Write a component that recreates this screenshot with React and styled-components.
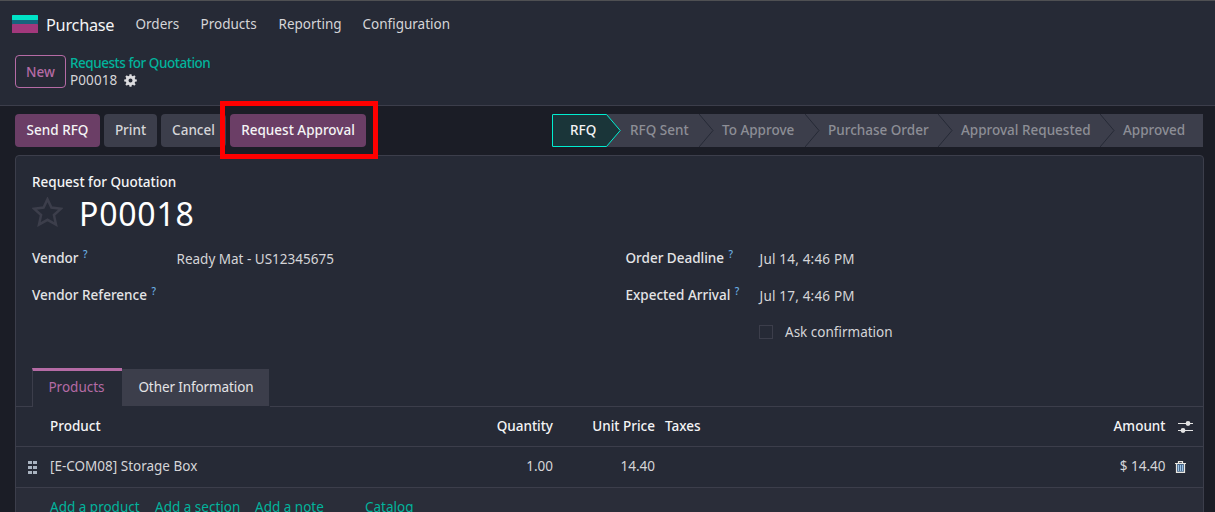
import React from "react";
import styled, { createGlobalStyle } from "styled-components";

const steps = [
  { label: "RFQ", width: 55, active: true },
  { label: "RFQ Sent", width: 92 },
  { label: "To Approve", width: 106 },
  { label: "Purchase Order", width: 133 },
  { label: "Approval Requested", width: 162 },
  { label: "Approved", width: 103 },
];

const menu = [
  { label: "Orders", width: 65 },
  { label: "Products", width: 78 },
  { label: "Reporting", width: 84 },
  { label: "Configuration", width: 90 },
];

const Help = () => <HelpMark>?</HelpMark>;

const Gear = () => (
  <GearIcon viewBox="-6.5 -6.5 13 13">
    {[0, 45, 90, 135, 180, 225, 270, 315].map((angle) => (
      <path key={angle} d="M-1.3 -4L-1 -6.3H1L1.3 -4Z" transform={`rotate(${angle})`} />
    ))}
    <circle r="3.4" fill="none" stroke="#dcdcdf" strokeWidth="2.8" />
  </GearIcon>
);

const App = () => {
  return (
    <React.Fragment>
      <GlobalStyle />
      <Page>
        <Header>
          <NavBar>
            <Logo viewBox="0 0 26 18">
              <rect width="26" height="5" rx="0.5" fill="#00e2c6" />
              <rect y="5" width="26" height="4" fill="#17647d" />
              <rect y="9" width="26" height="9" rx="0.5" fill="#a2387c" />
            </Logo>
            <AppName>Purchase</AppName>
            {menu.map((item) => (
              <MenuItem key={item.label} $width={item.width}>
                {item.label}
              </MenuItem>
            ))}
          </NavBar>
          <ControlPanel>
            <NewButton>New</NewButton>
            <Breadcrumb>
              <CrumbLink>Requests for Quotation</CrumbLink>
              <CrumbCurrent>
                P00018
                <Gear />
              </CrumbCurrent>
            </Breadcrumb>
          </ControlPanel>
        </Header>

        <StatusBar>
          <Buttons>
            <Button $primary $width={85}>
              Send RFQ
            </Button>
            <Button $width={53}>Print</Button>
            <Button $width={65}>Cancel</Button>
            <Marked>
              <Button $primary $width={136}>
                Request Approval
              </Button>
              <Marker />
            </Marked>
          </Buttons>
          <Steps>
            {steps.map((step, i) => (
              <Step key={step.label} $width={step.width} $active={step.active}>
                {step.active && (
                  <ActiveShape viewBox="0 0 70 33">
                    <path
                      d="M1 .5H54.5L68.2 16.5L54.5 32.5H1Q.5 32.5 .5 32V1Q.5 .5 1 .5Z"
                      fill="#1a3539"
                      stroke="#00edd0"
                    />
                  </ActiveShape>
                )}
                {i > 1 && (
                  <Chevron viewBox="0 0 15 33">
                    <path d="M0 0L14 16.5L0 33" fill="none" stroke="#262a36" />
                  </Chevron>
                )}
                <StepText>{step.label}</StepText>
              </Step>
            ))}
          </Steps>
        </StatusBar>

        <Sheet>
          <TitleBlock>
            <TitleLabel>Request for Quotation</TitleLabel>
            <TitleRow>
              <Star viewBox="0 0 31 30">
                <path
                  d="M15.5 2.2L19.4 10.6L29 11.7L21.9 18L24 27.6L15.5 22.8L7 27.6L9.1 18L2 11.7L11.6 10.6Z"
                  fill="none"
                  stroke="#3c3e4b"
                  strokeWidth="2.5"
                />
              </Star>
              <Title>P00018</Title>
            </TitleRow>
          </TitleBlock>

          <Groups>
            <Group $label={144.5} $width={593.5}>
              <Label>
                Vendor <Help />
              </Label>
              <Value>Ready Mat - US12345675</Value>
              <Label>
                Vendor Reference <Help />
              </Label>
              <Value />
            </Group>
            <Group $label={134} $width={500}>
              <Label>
                Order Deadline <Help />
              </Label>
              <Value $ls={0.2}>Jul 14, 4:46 PM</Value>
              <Label>
                Expected Arrival <Help />
              </Label>
              <Value $ls={0.2}>Jul 17, 4:46 PM</Value>
              <Label />
              <CheckRow>
                <Checkbox />
                Ask confirmation
              </CheckRow>
            </Group>
          </Groups>

          <Tabs>
            <TabSpace />
            <Tab $active $width={90}>
              Products
            </Tab>
            <Tab $width={147}>Other Information</Tab>
            <TabRest />
          </Tabs>

          <Row $head $height={40}>
            <span />
            <Cell>Product</Cell>
            <Cell $right>Quantity</Cell>
            <Cell $right>Unit Price</Cell>
            <Cell $left={10}>Taxes</Cell>
            <Cell $right>Amount</Cell>
            <Adjust viewBox="0 0 15 14">
              <path d="M0 3.5H15M0 10.5H15" stroke="#e4e4e4" strokeWidth="1.2" />
              <circle cx="10" cy="3.5" r="2.4" fill="#e4e4e4" />
              <circle cx="5" cy="10.5" r="2.4" fill="#e4e4e4" />
            </Adjust>
          </Row>
          <Row $height={41}>
            <Grip viewBox="0 0 9 13">
              {[0, 5, 10].map((y) => (
                <path key={y} d={`M0 ${y}h4v3h-4zM5 ${y}h4v3h-4z`} fill="#a9b3c0" />
              ))}
            </Grip>
            <Cell>[E-COM08] Storage Box</Cell>
            <Cell $right>1.00</Cell>
            <Cell $right>14.40</Cell>
            <Cell />
            <Cell $right>$ 14.40</Cell>
            <Trash viewBox="0 0 11 12">
              <path d="M2 3H9V11H2Z" fill="#4a698c" />
              <path
                d="M0 2.5H11M3.5 2.5V.7H7.5V2.5M1.5 2.5V11.4H9.5V2.5"
                fill="none"
                stroke="#e8e6e0"
                strokeWidth="1.2"
              />
              <path d="M3.5 4V10M5.5 4V10M7.5 4V10" stroke="#9cc3e6" />
            </Trash>
          </Row>
          <AddRow>
            <AddLink $width={105}>Add a product</AddLink>
            <AddLink $width={100}>Add a section</AddLink>
            <AddLink $width={110}>Add a note</AddLink>
            <AddLink $width={60}>Catalog</AddLink>
          </AddRow>
        </Sheet>
      </Page>
    </React.Fragment>
  );
};

const GlobalStyle = createGlobalStyle`
  * {
    box-sizing: border-box;
  }

  body {
    margin: 0;
    overflow: hidden;
    background: #1b1d26;
  }

  svg {
    display: block;
    flex-shrink: 0;
  }
`;

const Page = styled.div`
  height: 512px;
  overflow: hidden;
  display: flex;
  flex-direction: column;
  background: #1b1d26;
  color: #d5d5d8;
  font-family: "Noto Sans", sans-serif;
  font-size: 13.5px;
  line-height: 18px;
  white-space: nowrap;
`;

const Header = styled.header`
  height: 106px;
  flex-shrink: 0;
  background: #262a36;
  border-top: 1px solid #4f5053;
  border-bottom: 1px solid #3c3e4b;
`;

const NavBar = styled.nav`
  height: 46px;
  padding-left: 12px;
  display: flex;
  align-items: center;
`;

const Logo = styled.svg`
  width: 26px;
  height: 18px;
`;

const AppName = styled.div`
  width: 89.5px;
  margin: 2px 0 0 8px;
  padding-bottom: 1px;
  font-size: 16.3px;
  letter-spacing: -0.25px;
  color: #f4f4f5;
`;

const MenuItem = styled.div`
  width: ${(props) => props.$width}px;
`;

const ControlPanel = styled.div`
  padding: 8px 15px 0;
  display: flex;
`;

const NewButton = styled.button`
  width: 51px;
  height: 33px;
  padding: 0;
  border: 1px solid #b56ba5;
  border-radius: 4px;
  background: transparent;
  color: #b56ba5;
  font: inherit;
  font-weight: 500;
`;

const Breadcrumb = styled.div`
  padding-left: 4px;
  line-height: 17px;
`;

const CrumbLink = styled.div`
  color: #02b39c;
  font-weight: 500;
  letter-spacing: -0.47px;
`;

const CrumbCurrent = styled.div`
  display: flex;
  align-items: center;
  gap: 7px;
  letter-spacing: 0.1px;
`;

const GearIcon = styled.svg`
  width: 13px;
  height: 13px;
  fill: #dcdcdf;
`;

const StatusBar = styled.div`
  height: 49px;
  flex-shrink: 0;
  padding: 8px 12px 0 15px;
  display: flex;
  justify-content: space-between;
`;

const Buttons = styled.div`
  display: flex;
  gap: 4px;
`;

const Button = styled.button`
  width: ${(props) => props.$width}px;
  height: 33px;
  padding: 0 0 2px;
  border: 0;
  border-radius: 4px;
  background: ${(props) => (props.$primary ? "#6b3e66" : "#3c3e4b")};
  color: ${(props) => (props.$primary ? "#f4f4f5" : "#d5d5d8")};
  font: inherit;
  font-weight: 500;
`;

const Marked = styled.div`
  position: relative;
`;

const Marker = styled.div`
  position: absolute;
  top: -13px;
  left: -10px;
  width: 158px;
  height: 58px;
  border: 5px solid #fe0000;
`;

const Steps = styled.div`
  display: flex;
`;

const Step = styled.div`
  position: relative;
  width: ${(props) => props.$width}px;
  height: 33px;
  padding: 0 0 2px ${(props) => (props.$active ? 18 : 23)}px;
  display: flex;
  align-items: center;
  z-index: ${(props) => (props.$active ? 1 : 0)};
  background: #3c3e4b;
  color: ${(props) => (props.$active ? "#f4f4f5" : "#8d8e96")};
  font-weight: 500;
`;

const StepText = styled.span`
  position: relative;
`;

const ActiveShape = styled.svg`
  position: absolute;
  top: 0;
  left: 0;
  width: 70px;
  height: 33px;
`;

const Chevron = styled.svg`
  position: absolute;
  top: 0;
  left: 0;
  width: 15px;
  height: 33px;
`;

const Sheet = styled.main`
  height: 380px;
  flex-shrink: 0;
  margin: 0 11px 0 15px;
  border: 1px solid #3c3e4b;
  border-radius: 4px;
  background: #262a36;
`;

const TitleBlock = styled.div`
  height: 84px;
  padding: 17px 16px 0;
`;

const TitleLabel = styled.div`
  color: #f4f4f5;
  font-weight: 500;
`;

const TitleRow = styled.div`
  height: 44px;
  display: flex;
  align-items: center;
`;

const Star = styled.svg`
  width: 31px;
  height: 30px;
  margin-top: -2px;
`;

const Title = styled.h1`
  margin: 1px 0 0 16px;
  color: #ffffff;
  font-size: 32px;
  font-weight: 400;
  line-height: 44px;
  letter-spacing: 0.8px;
`;

const Groups = styled.div`
  height: 128px;
  padding-left: 16px;
  display: flex;
`;

const Group = styled.div`
  width: ${(props) => props.$width}px;
  display: grid;
  grid-template-columns: ${(props) => props.$label}px 1fr;
  grid-auto-rows: 37px;
`;

const Label = styled.div`
  padding-top: 9px;
  color: #e4e4e6;
  font-weight: 500;
`;

const HelpMark = styled.sup`
  margin-left: 1px;
  font-size: 10px;
  line-height: 0;
  color: #6cb0e6;
`;

const Value = styled.div`
  padding-top: 10px;
  letter-spacing: ${(props) => props.$ls || 0}px;
`;

const CheckRow = styled.div`
  height: 36px;
  display: flex;
  align-items: center;
  gap: 12px;
`;

const Checkbox = styled.span`
  width: 14px;
  height: 14px;
  margin-left: -0.5px;
  border: 1px solid #3c3e4b;
`;

const Tabs = styled.div`
  height: 39px;
  display: flex;
`;

const TabSpace = styled.div`
  width: 16px;
  border-bottom: 1px solid #3c3e4b;
`;

const Tab = styled.div`
  width: ${(props) => props.$width}px;
  height: 39px;
  display: flex;
  align-items: center;
  justify-content: center;
  ${(props) =>
    props.$active
      ? `
    border-top: 3px solid #b56ba5;
    border-left: 1px solid #3c3e4b;
    padding: 0 2px 5px 0;
    color: #b56ba5;
  `
      : `
    margin-top: 1px;
    height: 37px;
    background: #3c3e4b;
    padding: 0 0 1px 1px;
    letter-spacing: -0.1px;
    color: #e4e4e6;
  `}
`;

const TabRest = styled.div`
  flex: 1;
  margin-left: 1px;
  border-bottom: 1px solid #3c3e4b;
`;

const Row = styled.div`
  height: ${(props) => props.$height}px;
  display: grid;
  grid-template-columns: 34px 440px 63px 102px 200px 310.5px 1fr;
  align-items: center;
  border-bottom: 1px solid #3c3e4b;
  ${(props) => props.$head && "font-weight: 500; color: #f4f4f5;"}
`;

const Cell = styled.div`
  padding: 0 0 2px ${(props) => props.$left || 0}px;
  text-align: ${(props) => (props.$right ? "right" : "left")};
`;

const Adjust = styled.svg`
  width: 15px;
  height: 14px;
  margin-left: 12px;
`;

const Grip = styled.svg`
  width: 9px;
  height: 13px;
  margin-left: 12px;
`;

const Trash = styled.svg`
  width: 11px;
  height: 12px;
  margin: -1px 0 0 9.5px;
`;

const AddRow = styled.div`
  height: 47px;
  padding: 10px 0 0 34px;
  display: flex;
  background: #2a2d39;
`;

const AddLink = styled.a`
  width: ${(props) => props.$width}px;
  color: #02b39c;
`;

export default App;
